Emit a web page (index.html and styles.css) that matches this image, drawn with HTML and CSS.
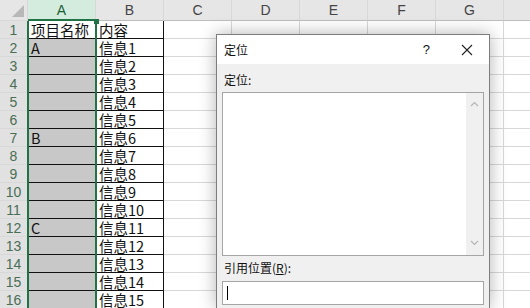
FILE: index.html
```html
<!DOCTYPE html>
<html lang="zh-CN">
<head>
  <meta charset="UTF-8" />
  <title>定位</title>
  <link rel="stylesheet" href="styles.css">
</head>
<body>

  <div class="sheet">
    <div class="grid">
      <!-- header row -->
      <div class="corner"><span class="tri"></span></div>
      <div class="col-head sel">A</div>
      <div class="col-head">B</div>
      <div class="col-head">C</div>
      <div class="col-head">D</div>
      <div class="col-head">E</div>
      <div class="col-head">F</div>
      <div class="col-head">G</div>
      <div class="col-head"></div>
    </div>
    <div class="grid rows" id="rows"></div>

    <!-- selection frame over column A -->
    <div class="sel-frame"><span class="handle"></span></div>

    <div class="dialog">
      <div class="dlg-title">
        <span>定位</span>
        <span class="dlg-btns"><span class="help">?</span><span class="close">
          <svg width="12" height="12" viewBox="0 0 12 12"><path d="M1 1L11 11M11 1L1 11" stroke="#222" stroke-width="1.1"/></svg>
        </span></span>
      </div>
      <div class="dlg-body">
        <div class="lbl first">定位:</div>
        <div class="listbox">
          <div class="scroll">
            <svg width="9" height="6" viewBox="0 0 9 6"><path d="M1 5L4.5 1.5L8 5" fill="none" stroke="#b5b5b5" stroke-width="1.2"/></svg>
            <svg width="9" height="6" viewBox="0 0 9 6"><path d="M1 1L4.5 4.5L8 1" fill="none" stroke="#b5b5b5" stroke-width="1.2"/></svg>
          </div>
        </div>
        <div class="lbl second">引用位置(<u>R</u>):</div>
        <div class="input"><span class="caret"></span></div>
      </div>
    </div>
  </div>

  <script>
    const rowsEl = document.getElementById("rows");
    const labels = { 2: "A", 7: "B", 12: "C" };
    for (let r = 1; r <= 16; r++) {
      let html = `<div class="row-head">${r}</div>`;
      const a = r === 1 ? "项目名称" : (labels[r] || "");
      const b = r === 1 ? "内容" : "信息" + (r - 1);
      html += `<div class="cell boxed ${r > 1 ? "grey" : ""}">${a}</div>`;
      html += `<div class="cell boxed">${b}</div>`;
      for (let c = 0; c < 6; c++) html += `<div class="cell"></div>`;
      rowsEl.insertAdjacentHTML("beforeend", html);
    }
  </script>

</body>
</html>
```

FILE: styles.css
```css
body {
  margin: 0;
  background: #ffffff;
  font-family: "Noto Sans CJK SC", "Noto Sans", sans-serif;
  overflow: hidden;
}

.sheet {
  position: relative;
  width: 530px;
  height: 308px;
  overflow: hidden;
}

.grid {
  display: grid;
  grid-template-columns: 28px repeat(8, 68px);
  grid-auto-rows: 18px;
}

.grid > div {
  box-sizing: border-box;
  border-right: 1px solid #d8d8d8;
  border-bottom: 1px solid #d8d8d8;
}

.grid:first-child {
  grid-auto-rows: 21px;
}

.corner {
  background: #e6e6e6;
  position: relative;
}

.corner .tri {
  position: absolute;
  right: 3px;
  bottom: 3px;
  width: 0;
  height: 0;
  border-left: 12px solid transparent;
  border-bottom: 12px solid #b8b8b8;
}

.col-head {
  background: #e6e6e6;
  color: #444;
  font-family: "Liberation Sans", sans-serif;
  font-size: 14px;
  text-align: center;
  line-height: 20px;
  border-bottom-color: #bdbdbd !important;
}

.col-head.sel {
  background: #d3ecdd;
  color: #1d5e36;
  border-bottom: 2px solid #217346 !important;
}

.row-head {
  background: #e1e1e1;
  color: #4a6e55;
  font-family: "Liberation Sans", sans-serif;
  font-size: 14px;
  text-align: center;
  line-height: 18px;
  border-right-color: #bdbdbd !important;
}

.cell {
  font-size: 14.5px;
  line-height: 17px;
  padding-left: 3px;
  color: #111;
  white-space: nowrap;
}

.cell.boxed {
  border-right: 1px solid #111 !important;
  border-bottom: 1px solid #111 !important;
}

.cell.grey {
  background: #c8c8c8;
}

.sel-frame {
  position: absolute;
  left: 27px;
  top: 21px;
  width: 70px;
  height: 287px;
  box-sizing: border-box;
  border-left: 2px solid #217346;
  border-right: 2px solid #217346;
  pointer-events: none;
}

.sel-frame .handle {
  position: absolute;
  right: -4px;
  top: -2px;
  width: 5px;
  height: 5px;
  background: #217346;
}

/* dialog */
.dialog {
  position: absolute;
  left: 216px;
  top: 34px;
  width: 274px;
  height: 274px;
  box-sizing: border-box;
  border: 1px solid #7d7d7d;
  border-bottom: none;
  background: #f0f0f0;
  box-shadow: 0 0 16px rgba(0, 0, 0, 0.3);
  font-size: 12px;
  color: #111;
}

.dlg-title {
  height: 29px;
  background: #ffffff;
  display: flex;
  align-items: center;
  justify-content: space-between;
  padding-left: 7px;
}

.dlg-btns {
  display: flex;
  align-items: center;
  gap: 31px;
  padding-right: 16px;
}

.help {
  font-family: "Liberation Sans", sans-serif;
  font-size: 13px;
}

.close {
  display: flex;
}

.dlg-body {
  padding: 0 5px;
}

.lbl {
  height: 22px;
  line-height: 22px;
  padding-left: 2px;
}

.lbl.first {
  margin-top: 5px;
  margin-bottom: 1px;
}

.lbl.second {
  margin-top: 1px;
}

.listbox {
  height: 164px;
  box-sizing: border-box;
  border: 1px solid #a5a5a5;
  background: #ffffff;
  display: flex;
  justify-content: flex-end;
}

.scroll {
  width: 17px;
  background: #f0f0f0;
  display: flex;
  flex-direction: column;
  justify-content: space-between;
  align-items: center;
  padding: 8px 0 9px;
}

.input {
  height: 24px;
  box-sizing: border-box;
  border: 1px solid #a5a5a5;
  background: #ffffff;
  margin-top: 2px;
  padding: 4px 0 0 4px;
}

.caret {
  display: block;
  width: 1px;
  height: 14px;
  background: #000;
}
```
